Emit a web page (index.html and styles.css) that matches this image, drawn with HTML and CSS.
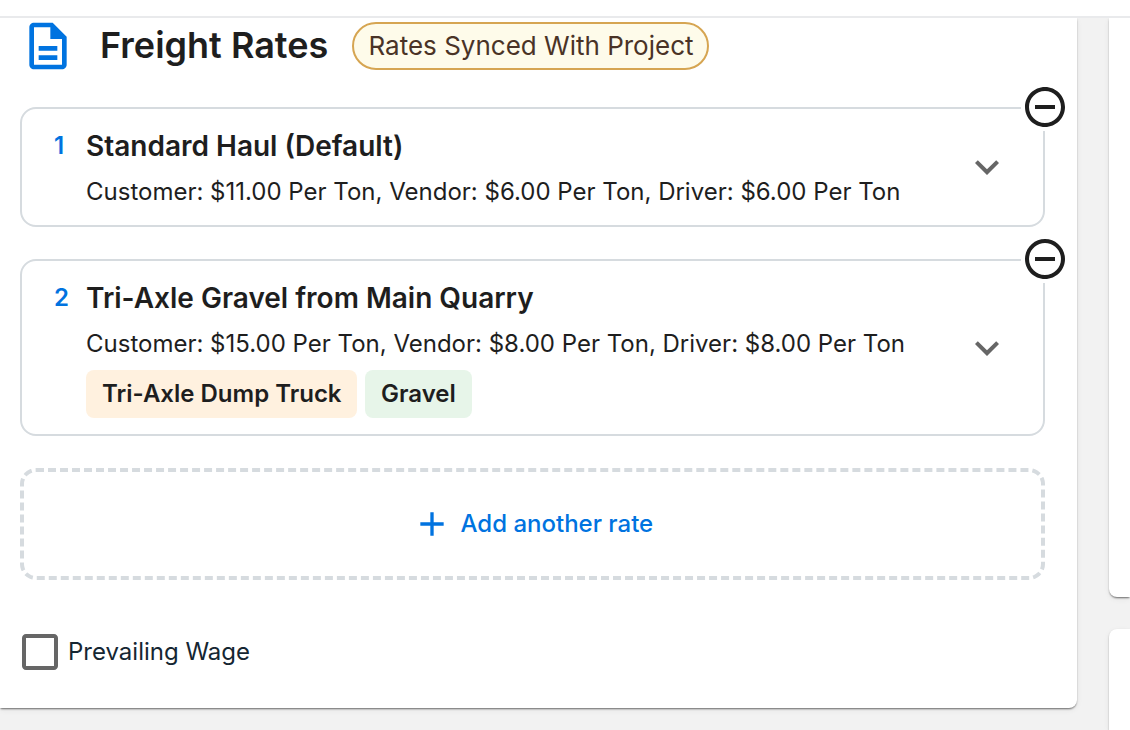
FILE: index.html
```html
<!DOCTYPE html>
<html lang="en">
<head>
<meta charset="utf-8">
<title>Freight Rates</title>
<link rel="stylesheet" href="styles.css">
</head>
<body>
<div class="topbar"></div>
<div class="layout">
  <main class="panel main-panel">
    <header class="heading">
      <svg class="doc-icon" viewBox="0 0 24 24"><path d="M8 16h8v2H8zm0-4h8v2H8zm6-10H6c-1.1 0-2 .9-2 2v16c0 1.1.89 2 1.99 2H18c1.1 0 2-.9 2-2V8l-6-6zm4 18H6V4h7v5h5v11z"/></svg>
      <h1 class="title">Freight Rates</h1>
      <span class="sync-badge">Rates Synced With Project</span>
    </header>

    <section class="rate rate-first">
      <span class="rate-number">1</span>
      <div class="rate-body">
        <h2 class="rate-name">Standard Haul (Default)</h2>
        <p class="rate-detail">Customer: $11.00 Per Ton, Vendor: $6.00 Per Ton, Driver: $6.00 Per Ton</p>
      </div>
      <svg class="chevron" viewBox="0 0 24 24"><path d="M16.59 8.59 12 13.17 7.41 8.59 6 10l6 6 6-6z"/></svg>
      <svg class="remove" viewBox="0 0 24 24"><path d="M7 11v2h10v-2H7zm5-9C6.48 2 2 6.48 2 12s4.48 10 10 10 10-4.48 10-10S17.52 2 12 2zm0 18c-4.41 0-8-3.59-8-8s3.59-8 8-8 8 3.59 8 8-3.59 8-8 8z"/></svg>
    </section>

    <section class="rate rate-second">
      <span class="rate-number">2</span>
      <div class="rate-body">
        <h2 class="rate-name">Tri-Axle Gravel from Main Quarry</h2>
        <p class="rate-detail">Customer: $15.00 Per Ton, Vendor: $8.00 Per Ton, Driver: $8.00 Per Ton</p>
        <div class="tags">
          <span class="tag tag-truck">Tri-Axle Dump Truck</span>
          <span class="tag tag-material">Gravel</span>
        </div>
      </div>
      <svg class="chevron" viewBox="0 0 24 24"><path d="M16.59 8.59 12 13.17 7.41 8.59 6 10l6 6 6-6z"/></svg>
      <svg class="remove" viewBox="0 0 24 24"><path d="M7 11v2h10v-2H7zm5-9C6.48 2 2 6.48 2 12s4.48 10 10 10 10-4.48 10-10S17.52 2 12 2zm0 18c-4.41 0-8-3.59-8-8s3.59-8 8-8 8 3.59 8 8-3.59 8-8 8z"/></svg>
    </section>

    <button class="add-rate" type="button">
      <svg class="plus" viewBox="0 0 24 24"><path d="M19 13h-6v6h-2v-6H5v-2h6V5h2v6h6z"/></svg>
      <span class="add-label">Add another rate</span>
    </button>

    <div class="wage">
      <svg class="checkbox" viewBox="0 0 24 24"><path d="M19 5v14H5V5h14m0-2H5c-1.1 0-2 .9-2 2v14c0 1.1.9 2 2 2h14c1.1 0 2-.9 2-2V5c0-1.1-.9-2-2-2z"/></svg>
      <span class="wage-label">Prevailing Wage</span>
    </div>
  </main>
  <aside class="side">
    <div class="panel side-top"></div>
    <div class="panel side-bottom"></div>
  </aside>
</div>
</body>
</html>
```
FILE: styles.css
```css
* { box-sizing: border-box; }
body {
  margin: 0;
  width: 1130px;
  height: 730px;
  overflow: hidden;
  background: #f2f2f2;
  font-family: Inter, sans-serif;
  color: #1e1e1e;
}
h1, h2, p { margin: 0; }
svg { display: block; flex: none; }
.topbar {
  position: relative;
  z-index: 1;
  height: 18px;
  background: #fff;
  border-bottom: 2px solid #e9eaec;
}
.layout { display: flex; gap: 32px; height: 712px; }
.panel {
  background: #fff;
  box-shadow: 0 2px 2px -1px rgba(0,0,0,.4), 0 1px 2px rgba(0,0,0,.2), 0 2px 6px rgba(0,0,0,.06);
}
.main-panel {
  width: 1077px;
  height: 690px;
  flex: none;
  padding-left: 20px;
  border-radius: 0 0 8px 0;
}
.heading { display: flex; align-items: center; height: 56px; }
.doc-icon { width: 56px; height: 56px; fill: #0073e0; }
.title {
  width: 252px;
  margin-left: 24px;
  padding-bottom: 2px;
  font-size: 36px;
  font-weight: 600;
  line-height: 46px;
  white-space: nowrap;
}
.sync-badge {
  width: 357px;
  height: 48px;
  border: 2px solid #d6a552;
  border-radius: 24px;
  background: #fefbea;
  color: #4a3326;
  padding-left: 14.5px;
  font-size: 26px;
  line-height: 44px;
  white-space: nowrap;
}
.rate {
  position: relative;
  display: flex;
  width: 1025px;
  padding: 16px 32px 0;
  border: 2px solid #d6dbdf;
  border-radius: 16px;
}
.rate-first { height: 120px; margin-top: 33px; }
.rate-second { height: 177px; margin-top: 32px; }
.rate-number {
  width: 32px;
  flex: none;
  color: #0073e0;
  font-size: 24px;
  font-weight: 600;
  line-height: 42px;
}
.rate-body { flex: 1; white-space: nowrap; }
.rate-name { font-size: 28px; font-weight: 600; line-height: 42px; }
.rate-detail { margin-top: 5px; font-size: 24px; line-height: 40px; }
.chevron { width: 48px; height: 48px; align-self: center; margin-top: -16px; fill: #666; }
.remove {
  position: absolute;
  top: -26px;
  right: -26px;
  width: 48px;
  height: 48px;
  background: #fff;
  fill: #1e1e1e;
}
.tags { display: flex; gap: 8px; margin-top: 6px; }
.tag {
  height: 48px;
  padding: 0 16px;
  border-radius: 8px;
  font-size: 24px;
  font-weight: 600;
  line-height: 48px;
}
.tag-truck { width: 271px; background: #fff1df; }
.tag-material { width: 107px; background: #e7f5e9; }
.add-rate {
  display: flex;
  align-items: center;
  gap: 8.5px;
  width: 1025px;
  height: 112px;
  margin: 32px 0 0;
  padding: 0 0 0 388px;
  border: 4px dashed #d6dbdf;
  border-radius: 16px;
  background: none;
  color: #0073e0;
  font: 500 24px/40px Inter, sans-serif;
}
.plus { width: 40px; height: 40px; fill: #0073e0; }
.wage { display: flex; align-items: center; margin: 48px 0 0 -4px; }
.checkbox { width: 48px; height: 48px; fill: #666; }
.wage-label { margin-left: 4px; color: #152632; font-size: 24px; line-height: 40px; }
.side { display: flex; flex-direction: column; gap: 32px; flex: 1; }
.side-top { height: 579px; border-radius: 0 0 0 8px; }
.side-bottom { flex: 1; border-radius: 8px 0 0 0; }
```
